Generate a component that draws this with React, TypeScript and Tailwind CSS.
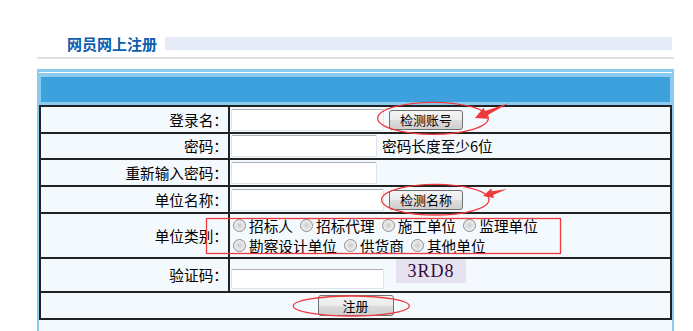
import React from 'react';

const inputCls =
  'h-[22px] rounded-[2px] border border-[#dfe3ea] border-t-[#abadb3] bg-white';
const btnCls =
  'flex items-center justify-center rounded-[3px] border border-[#707070] bg-[linear-gradient(#f4f4f4,#ebebeb_50%,#dddddd_51%,#cfcfcf)] text-[13px] leading-none text-black';
const labelCls = 'flex items-center justify-end whitespace-nowrap bg-[#f4f9fe]';
const valueCls = 'flex items-center bg-[#f4f9fe] pl-[1px]';

function Radio({ text }: { text: string }) {
  return (
    <span className="mr-[4px] flex items-center">
      <span className="ml-[3px] mr-[3px] h-[13px] w-[13px] rounded-full border border-[#8d8d8d] bg-[radial-gradient(circle,#c9c9c9_0%,#e4e4e4_45%,#f7f7f7_100%)]" />
      <span>{text}</span>
    </span>
  );
}

export default function App() {
  return (
    <div className="relative h-[331px] w-[693px] overflow-hidden bg-white font-['Noto_Sans_CJK_SC',sans-serif] text-[14.67px] text-black">
      {/* title */}
      <div className="ml-[67px] mt-[37px] flex h-[13px] items-center">
        <span className="text-[15px] font-bold leading-[13px] text-[#0c5dae]">网员网上注册</span>
        <div className="ml-[8px] h-[13px] w-[507px] bg-[#e5ecf8]" />
      </div>
      <div className="ml-[37px] mt-[7px] h-[2px] w-[637px] bg-[#e0e0e0]" />

      {/* form box */}
      <div className="ml-[37px] mt-[10px] h-[262px] w-[637px] border-x-2 border-t-2 border-[#8ccbf0] bg-[#f4f9fe]">
        <div className="bg-[#8ccbf0] pt-px">
          <div className="h-px bg-white" />
          <div className="px-[2px] pb-[3px] pt-[4px]">
            <div className="h-[25px] bg-[#3ca1dc]" />
          </div>
        </div>

        <div className="grid grid-cols-[187px_1fr] gap-[2px] bg-[#222] p-[2px]">
          <div className={`${labelCls} h-[25px]`}>登录名：</div>
          <div className={`${valueCls} h-[25px]`}>
            <div className={`${inputCls} w-[153px]`} />
            <div className={`${btnCls} ml-[5px] h-[20px] w-[74px]`}>检测账号</div>
          </div>

          <div className={`${labelCls} h-[24px]`}>密码：</div>
          <div className={`${valueCls} h-[24px]`}>
            <div className={`${inputCls} w-[146px]`} />
            <span className="ml-[5px]">密码长度至少6位</span>
          </div>

          <div className={`${labelCls} h-[25px]`}>重新输入密码：</div>
          <div className={`${valueCls} h-[25px]`}>
            <div className={`${inputCls} w-[146px]`} />
          </div>

          <div className={`${labelCls} h-[25px]`}>单位名称：</div>
          <div className={`${valueCls} h-[25px]`}>
            <div className={`${inputCls} w-[153px]`} />
            <div className={`${btnCls} ml-[5px] h-[20px] w-[74px]`}>检测名称</div>
          </div>

          <div className={`${labelCls} h-[43px]`}>单位类别：</div>
          <div className="flex h-[43px] flex-col justify-center bg-[#f4f9fe]">
            <div className="flex h-[20px] items-center">
              <Radio text="招标人" />
              <Radio text="招标代理" />
              <Radio text="施工单位" />
              <Radio text="监理单位" />
            </div>
            <div className="flex h-[20px] items-center">
              <Radio text="勘察设计单位" />
              <Radio text="供货商" />
              <Radio text="其他单位" />
            </div>
          </div>

          <div className={`${labelCls} h-[32px]`}>验证码：</div>
          <div className="flex h-[32px] items-start bg-[#f4f9fe] pl-[1px]">
            <div className="mt-[10px] h-[20px] w-[153px] rounded-[2px] border border-[#dfe3ea] border-t-[#abadb3] bg-white" />
            <div className="ml-[12px] flex h-[24px] w-[70px] items-center justify-center bg-[#e6e2f2] font-['Liberation_Serif',serif] text-[18px] tracking-[1px] text-[#2e0a3a]">
              3RD8
            </div>
          </div>

          <div className="col-span-2 flex h-[25px] items-center justify-center bg-[#f4f9fe]">
            <div className={`${btnCls} h-[21px] w-[76px]`}>注册</div>
          </div>
        </div>
      </div>

      {/* annotations */}
      <svg className="pointer-events-none absolute left-0 top-0" width="693" height="331" viewBox="0 0 693 331">
        <g fill="none" stroke="#f0393c" strokeWidth="1.3">
          <ellipse cx="433" cy="118.3" rx="55.3" ry="16" />
          <ellipse cx="435.3" cy="199.7" rx="53.7" ry="15.3" />
          <ellipse cx="351.3" cy="306" rx="58" ry="10" />
          <rect x="206.5" y="218.5" width="354" height="35" />
        </g>
        <g fill="#f0393c">
          <polygon points="509,103 485,110.9 483.6,107.7 475,118 488.4,118.7 487,115.5" />
          <polygon points="507,189 492,191.3 491.2,188.4 483,196 494,198 493.2,195.1" />
        </g>
      </svg>
    </div>
  );
}
